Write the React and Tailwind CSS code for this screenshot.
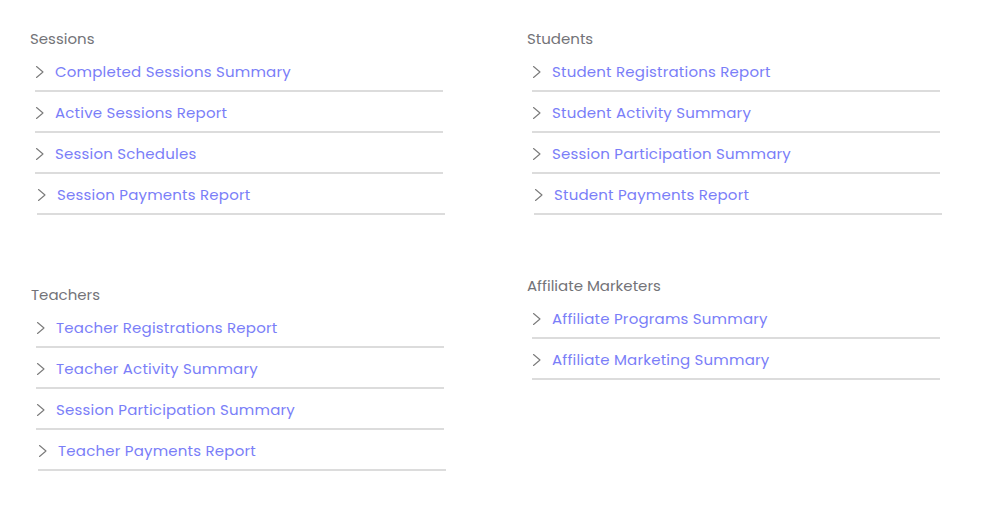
import React from 'react';

const sections = {
    left: [
        {
            title: 'Sessions',
            offset: 'mt-0 ml-[30px]',
            items: ['Completed Sessions Summary', 'Active Sessions Report', 'Session Schedules', 'Session Payments Report']
        },
        {
            title: 'Teachers',
            offset: 'mt-[71px] ml-[31px]',
            items: ['Teacher Registrations Report', 'Teacher Activity Summary', 'Session Participation Summary', 'Teacher Payments Report']
        }
    ],
    right: [
        {
            title: 'Students',
            offset: 'mt-0 ml-0',
            items: ['Student Registrations Report', 'Student Activity Summary', 'Session Participation Summary', 'Student Payments Report']
        },
        {
            title: 'Affiliate Marketers',
            offset: 'mt-[62px] ml-0',
            items: ['Affiliate Programs Summary', 'Affiliate Marketing Summary']
        }
    ]
};

const Chevron = () => (
    <svg width="10" height="14" viewBox="0 0 10 14" fill="none" stroke="#7a7a7a" strokeWidth="1.1" strokeLinecap="round" strokeLinejoin="round" className="shrink-0">
        <path d="M1.5 1.5 L8 7 L1.5 12.5" />
    </svg>
);

const Section = ({ title, items, offset }) => (
    <div className={offset}>
        <h3 className="text-[15px] leading-[18px] text-[#737378]">{title}</h3>
        <ul className="mt-[3px] ml-[5px]">
            {items.map((item, i) => {
                // last row in the 4-row lists sits a couple px to the right in the design
                const shifted = items.length === 4 && i === items.length - 1;
                return (
                    <li
                        key={item}
                        className={`w-[408px] h-[41px] pt-[3px] flex items-center border-b-2 border-[#dcdcdc] cursor-pointer ${shifted ? 'ml-[2px]' : ''}`}
                    >
                        <Chevron />
                        <span className="ml-[10px] text-[15px] text-[#7a7ef8] tracking-[0.2px]">{item}</span>
                    </li>
                );
            })}
        </ul>
    </div>
);

const App = () => {
    return (
        <div className="w-[987px] h-[518px] bg-white pt-[30px] flex" style={{ fontFamily: '"Poppins", "Open Sans", sans-serif' }}>
            <div className="w-[527px]">
                {sections.left.map((s) => <Section key={s.title} {...s} />)}
            </div>
            <div>
                {sections.right.map((s) => <Section key={s.title} {...s} />)}
            </div>
        </div>
    );
};

export default App;
